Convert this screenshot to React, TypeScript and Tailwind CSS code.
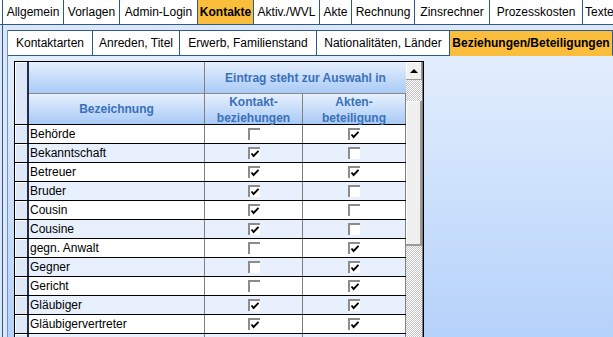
import React from "react";

const topTabs = [
  { label: "Allgemein", w: "w-[62px] border-l justify-center" },
  { label: "Vorlagen", w: "w-[56px] justify-center" },
  { label: "Admin-Login", w: "w-[78px] justify-center" },
  { label: "Kontakte", w: "w-[56px] justify-center", active: true },
  { label: "Aktiv./WVL", w: "w-[66px] justify-center" },
  { label: "Akte", w: "w-[32px] justify-center" },
  { label: "Rechnung", w: "w-[63px] justify-center" },
  { label: "Zinsrechner", w: "w-[75px] justify-center" },
  { label: "Prozesskosten", w: "w-[93px] justify-center" },
  { label: "Texte", w: "w-[60px] justify-start pl-[2px]" },
];

const subTabs = [
  { label: "Kontaktarten", w: "w-[85px]" },
  { label: "Anreden, Titel", w: "w-[87px]" },
  { label: "Erwerb, Familienstand", w: "w-[137px]" },
  { label: "Nationalitäten, Länder", w: "w-[133px]" },
  { label: "Beziehungen/Beteiligungen", w: "w-[163px]", active: true },
];

const rows: [string, boolean, boolean][] = [
  ["Behörde", false, true],
  ["Bekanntschaft", true, false],
  ["Betreuer", true, true],
  ["Bruder", true, false],
  ["Cousin", true, false],
  ["Cousine", true, false],
  ["gegn. Anwalt", false, true],
  ["Gegner", false, true],
  ["Gericht", false, true],
  ["Gläubiger", true, true],
  ["Gläubigervertreter", true, true],
  ["", false, false],
];

function CheckBox({ checked }: { checked: boolean }) {
  return (
    <div className="relative w-[12px] h-[12px] bg-white border-t-2 border-l-2 border-[#8c8c8c]">
      {checked && (
        <svg width="10" height="10" viewBox="0 0 10 10" className="absolute left-[0px] top-[0px]">
          <path d="M1.5 4.5 L3.6 7 L8.5 1.8" fill="none" stroke="#000" strokeWidth="1.9" />
        </svg>
      )}
    </div>
  );
}

const headCell = "bg-linear-to-b from-[#e7f0fd] to-[#a8caf6] text-[#3a71b9] font-bold";

export default function App() {
  return (
    <div className="w-[613px] h-[337px] overflow-hidden bg-[#dbe7f8] text-[12px] text-black font-['Liberation_Sans',Arial,sans-serif]">
      {/* main tabs */}
      <div className="flex h-[25px] pl-[2px] border-b border-[#2b5b8e] bg-white overflow-hidden">
        {topTabs.map((t) => (
          <div
            key={t.label}
            className={`${t.w} shrink-0 h-full flex items-center whitespace-nowrap border-r border-[#2b5b8e] ${
              t.active ? "bg-[#fbbd3c] font-bold" : "bg-white"
            }`}
          >
            {t.label}
          </div>
        ))}
      </div>

      <div className="ml-[2px] h-[312px] border-l border-[#2b5b8e] pl-[4px] pt-[5px]">
        <div className="h-full flex flex-col border-l border-[#6e92c4]">
          {/* sub tabs */}
          <div className="flex h-[26px] border-t border-[#2b5b8e]">
            {subTabs.map((t) => (
              <div
                key={t.label}
                className={`${t.w} shrink-0 h-[25px] flex items-center justify-center whitespace-nowrap border-r border-b ${
                  t.active
                    ? "bg-[#fbbd3c] font-bold border-r-[#2b5b8e] border-b-[#fbbd3c]"
                    : "bg-white border-[#2b5b8e]"
                }`}
              >
                {t.label}
              </div>
            ))}
          </div>

          {/* content */}
          <div className="flex-1 bg-linear-to-b from-[#e3eefd] to-[#b5d2fa] pl-[6px] pt-[5px] overflow-hidden">
            <div className="w-[410px] border border-black flex">
              <div className="flex flex-col">
                {/* header */}
                <div className="flex border-b border-black">
                  <div className="w-[14px] h-[62px] bg-[#dde7f7] border-r-2 border-[#1f2d4a] shadow-[inset_1px_1px_0_#ffffff]" />
                  <div className="w-[176px] flex flex-col border-r border-[#808080]">
                    <div className={`h-[32px] border-b border-[#8a8a8a] ${headCell}`} />
                    <div className={`h-[30px] flex items-center justify-center ${headCell}`}>Bezeichnung</div>
                  </div>
                  <div className="w-[201px] flex flex-col">
                    <div className={`h-[32px] border-b border-[#8a8a8a] flex items-center justify-center ${headCell}`}>
                      Eintrag steht zur Auswahl in
                    </div>
                    <div className="flex h-[30px]">
                      <div className={`w-[98px] border-r border-[#808080] flex flex-col items-center leading-[16px] ${headCell}`}>
                        <span>Kontakt-</span>
                        <span>beziehungen</span>
                      </div>
                      <div className={`w-[103px] border-r border-[#808080] flex flex-col items-center leading-[16px] ${headCell}`}>
                        <span>Akten-</span>
                        <span>beteiligung</span>
                      </div>
                    </div>
                  </div>
                </div>

                {/* rows */}
                {rows.map(([name, k, a], i) => (
                  <div
                    key={i}
                    className={`flex h-[19px] border-b border-black ${i % 2 === 0 ? "bg-white" : "bg-[#e8f0fd]"}`}
                  >
                    <div className="w-[14px] h-full bg-[#dfe8f7] border-r-2 border-[#1f2d4a] shadow-[inset_1px_1px_0_#ffffff]" />
                    <div className="w-[176px] pl-[1px] flex items-center border-r border-[#808080] whitespace-nowrap">
                      {name}
                    </div>
                    <div className="w-[98px] flex items-center justify-center border-r border-[#808080]">
                      {name && <CheckBox checked={k} />}
                    </div>
                    <div className="w-[103px] flex items-center justify-center border-r border-[#808080]">
                      {name && <CheckBox checked={a} />}
                    </div>
                  </div>
                ))}
              </div>

              {/* scrollbar */}
              <div className="w-[17px] flex flex-col bg-[repeating-conic-gradient(#c4c4c4_0_25%,#ffffff_0_50%)] bg-[length:2px_2px] border-r border-[#7a7a7a]">
                <div className="h-[18px] shrink-0 bg-[#f0f0f0] border-r border-b border-[#9a9a9a] shadow-[inset_1px_1px_0_#ffffff] flex items-center justify-center">
                  <svg width="8" height="5" viewBox="0 0 8 5">
                    <path d="M0 5 L4 1 L8 5 Z" fill="#000" />
                  </svg>
                </div>
                <div className="h-[21px] shrink-0" />
                <div className="h-[145px] shrink-0 bg-[#f0f0f0] border-r-2 border-b-2 border-[#9a9a9a] shadow-[inset_1px_1px_0_#ffffff]" />
                <div className="flex-1" />
              </div>
            </div>
          </div>
        </div>
      </div>
    </div>
  );
}
